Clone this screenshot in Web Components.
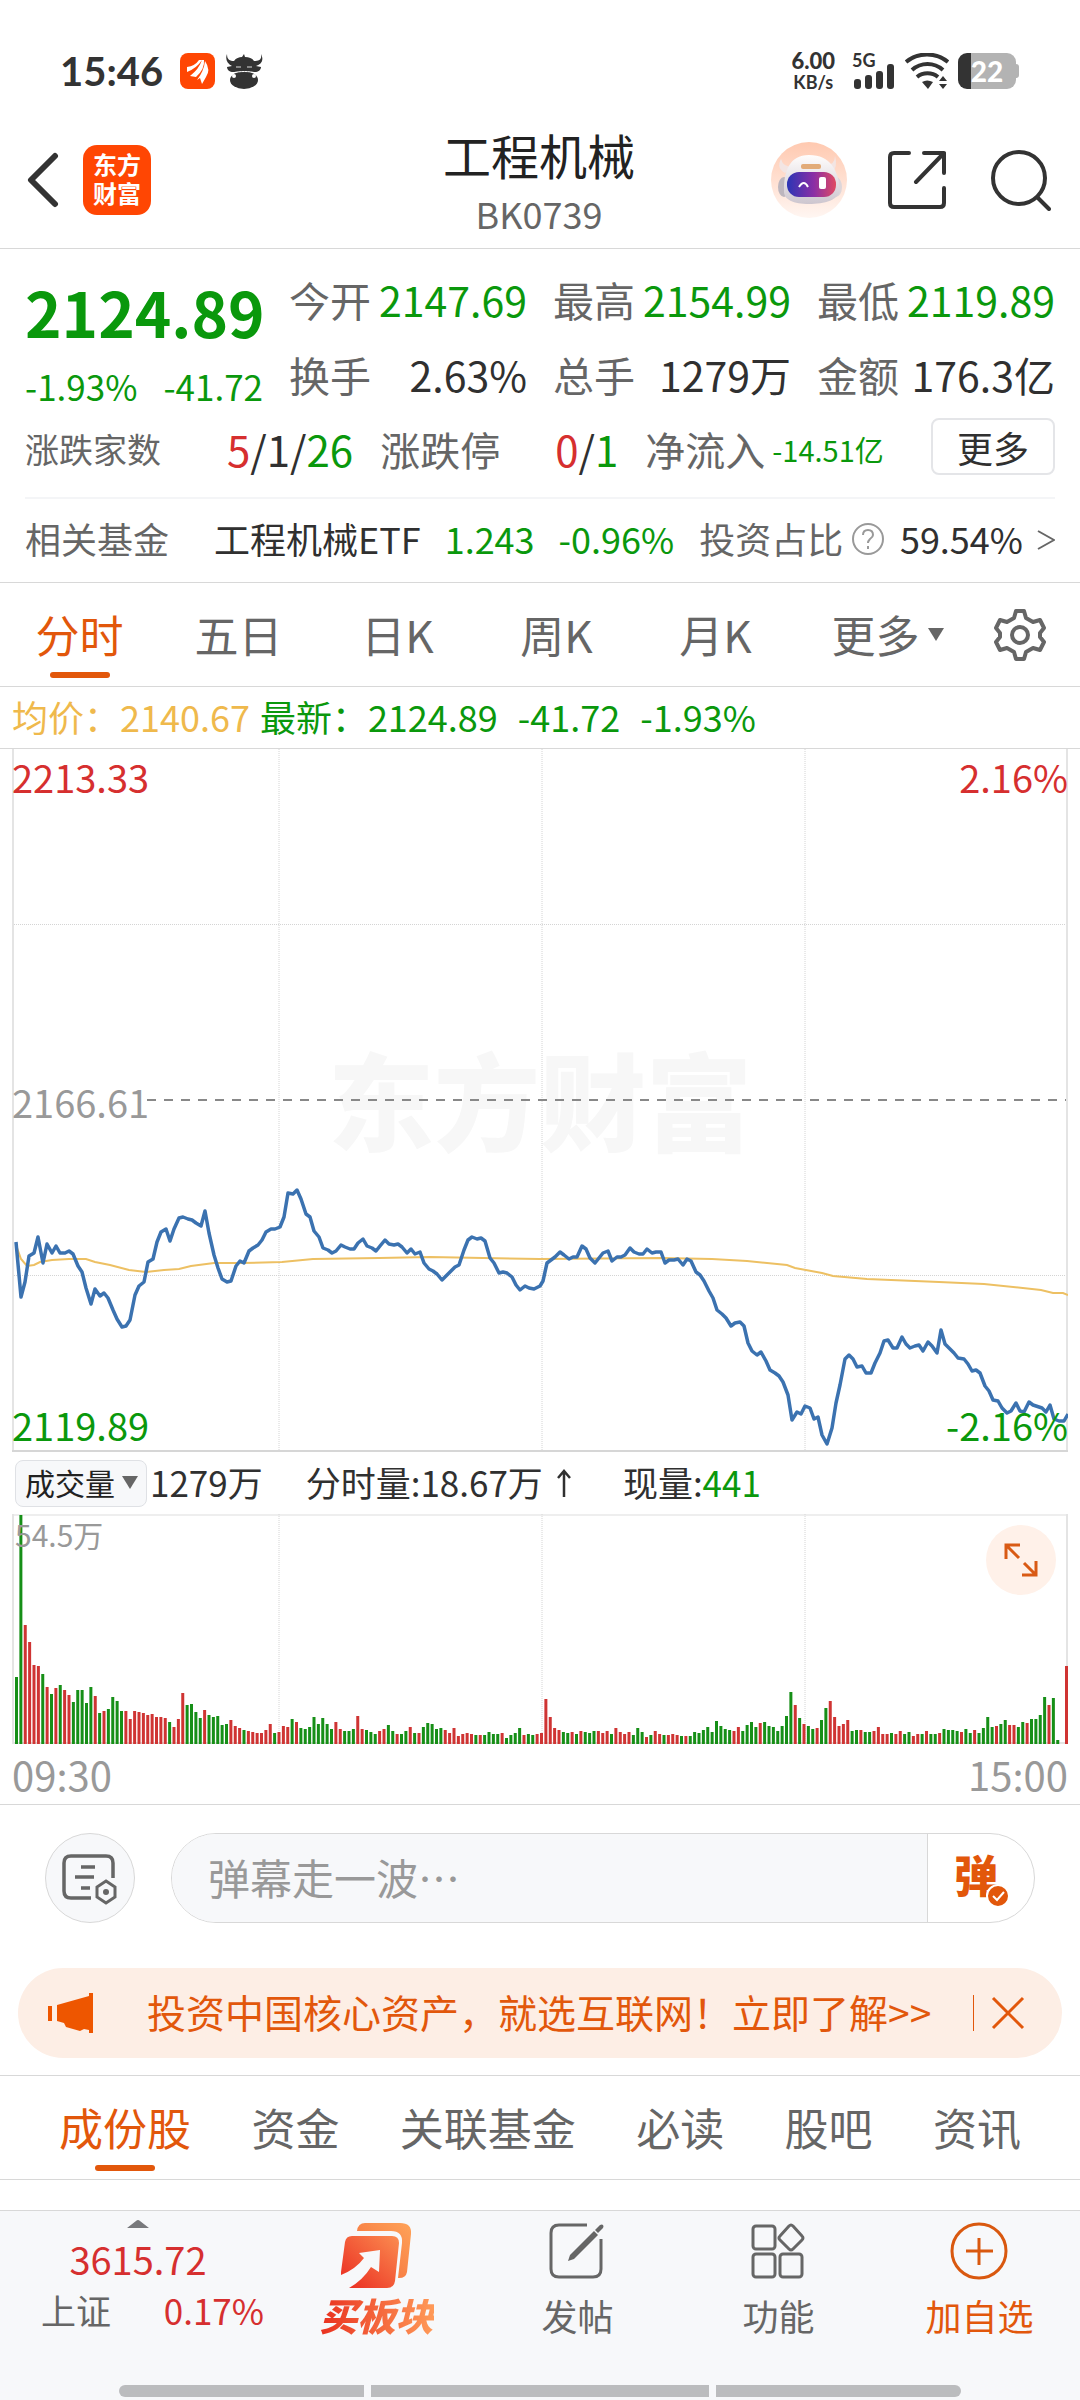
<!DOCTYPE html>
<html lang="zh-CN">
<head>
<meta charset="utf-8">
<meta name="viewport" content="width=device-width, initial-scale=1">
<title>工程机械 BK0739</title>
<style>
	:root {
		--up: #d62f2f;
		--down: #0a980c;
		--accent: #e2570b;
		--text: #303030;
		--muted: #666;
		--faint: #999;
		--line: #d8d8d8;
		--panel: #f7f8fa;
	}
	body {
		margin: 0;
		background: #fff;
		color: var(--text);
		font-family: "Noto Sans CJK SC", "Noto Sans", sans-serif;
	}
	stock-page {
		min-height: 100vh;
	}
</style>
</head>
<body>
<stock-page>
	<status-bar></status-bar>
	<page-header code="BK0739">工程机械</page-header>
	<quote-board></quote-board>
	<period-tabs></period-tabs>
	<trend-chart></trend-chart>
	<volume-chart></volume-chart>
	<comment-bar></comment-bar>
	<promo-banner>投资中国核心资产，就选互联网！立即了解&gt;&gt;</promo-banner>
	<section-tabs>
		<tab-item selected>成份股</tab-item>
		<tab-item>资金</tab-item>
		<tab-item>关联基金</tab-item>
		<tab-item>必读</tab-item>
		<tab-item>股吧</tab-item>
		<tab-item>资讯</tab-item>
	</section-tabs>
	<bottom-bar slot="footer"></bottom-bar>
</stock-page>

<script>
// registers an element whose shadow root is cloned from a template
function component(name, html, setup) {
	const template = document.createElement("template");
	template.innerHTML = html;
	customElements.define(name, class extends HTMLElement {
		constructor() {
			super();
			this.attachShadow({mode: "open"}).appendChild(template.content.cloneNode(true));
		}
		connectedCallback() {
			if(setup) setup(this, this.shadowRoot);
		}
	});
}

const controls = `
	button {
		font: inherit;
		color: inherit;
		background: none;
		border: 0;
		padding: 0;
		margin: 0;
		cursor: pointer;
	}
	svg { display: block; }
`;

component("stock-page",
`<style>
	:host {
		display: flex;
		flex-direction: column;
	}
	footer { margin-top: auto; }
</style>
<slot></slot>
<footer><slot name="footer"></slot></footer>`);

component("status-bar",
`<style>
	:host {
		display: flex;
		align-items: center;
		justify-content: space-between;
		height: 82px;
		padding: 30px 61px 0 60px;
		font-family: Lato, sans-serif;
		font-weight: 700;
		color: #333;
	}
	div { display: flex; align-items: center; }
	svg { display: block; }
	time { font-size: 40px; margin-right: 17px; }
	.rate {
		display: grid;
		justify-items: center;
		margin-right: 17px;
	}
	.rate b { font-size: 22px; line-height: 22px; }
	.rate small { font-size: 18px; line-height: 20px; }
	.signal { position: relative; margin-right: 10px; }
	.signal span {
		position: absolute;
		left: 0;
		top: -2px;
		font-size: 18px;
		line-height: 18px;
	}
	.battery {
		width: 58px;
		height: 36px;
		margin-left: 9px;
		border-radius: 9px;
		background: linear-gradient(90deg, #333 13px, #b3b3b3 13px);
		justify-content: center;
		color: #fff;
		font-weight: 900;
		font-size: 28px;
	}
	.tip {
		width: 3px;
		height: 14px;
		border-radius: 0 3px 3px 0;
		background: #b3b3b3;
	}
</style>
<div>
	<time>15:46</time>
	<svg width="35" height="36" viewBox="0 0 35 36">
		<rect width="35" height="36" rx="8" fill="#ff4603"/>
		<path fill="#fff" d="M7 14q8-1 12-7h3Q17 15 7 19zM10 23q9-7 12-16h2q1 9-8 17zM17 27q7-9 8-19 6 9 1 16l-4 7-2-6z"/>
	</svg>
	<svg width="37" height="36" viewBox="0 0 37 36" style="margin-left:11px">
		<path fill="#333" d="M1 1c0 6 3 7 7 7 2-3 5-4 8-4l2-3 1 3c4 0 7 1 9 4 5 0 8-1 7-7 3 6 1 10-5 12l5 1c0 3-3 5-6 5H7c-3 0-6-2-6-5l5-1C1 11-1 6 1 1z"/>
		<ellipse cx="18" cy="27" rx="14" ry="9" fill="#333"/>
		<path d="M6 20c8-2 17-2 24 0" fill="none" stroke="#fff" stroke-width="1"/>
		<path d="M10 14h5M21 14h5" stroke="#ddd" stroke-width="1"/>
		<circle cx="8" cy="23" r="2" fill="#fff"/><circle cx="28" cy="23" r="2" fill="#fff"/>
	</svg>
</div>
<div>
	<span class="rate"><b>6.00</b><small>KB/s</small></span>
	<div class="signal">
		<span>5G</span>
		<svg width="43" height="36" viewBox="0 0 43 36" fill="#333">
			<rect x="2" y="26" width="7" height="10" rx="3"/>
			<rect x="13" y="22" width="7" height="14" rx="3"/>
			<rect x="24" y="18" width="7" height="18" rx="3"/>
			<rect x="35" y="11" width="7" height="25" rx="3"/>
		</svg>
	</div>
	<svg width="44" height="36" viewBox="0 0 44 36" fill="none" stroke="#333" stroke-width="4">
		<path d="M1 9c12-10 30-10 42 0M7 17c9-8 22-8 31 0M12 24c6-5 15-5 21 0"/>
		<path d="M17 29q5-3 11 0l-5 7z" fill="#333" stroke="none"/>
		<path d="M34 28l4-5 4 5zM34 31h8l-4 5z" fill="#333" stroke="none"/>
	</svg>
	<div class="battery">22</div>
	<span class="tip"></span>
</div>`);

component("page-header",
`<style>${controls}
	:host {
		display: grid;
		grid-template-columns: 1fr auto 1fr;
		align-items: center;
		height: 136px;
		padding: 0 29px 0 27px;
		border-bottom: 1px solid var(--line);
	}
	.left, .right { display: flex; align-items: center; }
	.left { gap: 24px; }
	.right { justify-content: flex-end; }
	.logo {
		width: 68px;
		height: 70px;
		border-radius: 14px;
		background: #ff4603;
		color: #fff;
		font-weight: 700;
		font-size: 24px;
		line-height: 29px;
		padding: 4px 10px 8px;
		box-sizing: border-box;
	}
	.title { text-align: center; padding-top: 8px; }
	h1 { margin: 0; font-weight: 400; font-size: 48px; line-height: 58px; color: #222; }
	p { margin: 0; font-size: 36px; line-height: 60px; color: var(--muted); }
</style>
<div class="left">
	<button aria-label="返回">
		<svg width="32" height="56" viewBox="0 0 32 56" fill="none" stroke="#333" stroke-width="6" stroke-linecap="round" stroke-linejoin="round"><path d="M28 4L4 28l24 24"/></svg>
	</button>
	<div class="logo">东方财富</div>
</div>
<div class="title">
	<h1><slot></slot></h1>
	<p></p>
</div>
<div class="right">
	<button aria-label="助手">
		<svg width="76" height="76" viewBox="0 0 76 76">
			<defs>
				<linearGradient id="sky" x2="0" y2="1"><stop stop-color="#ffc9b0"/><stop offset="1" stop-color="#fff6f2"/></linearGradient>
				<linearGradient id="visor"><stop stop-color="#2b35b5"/><stop offset=".55" stop-color="#8b2fa5"/><stop offset="1" stop-color="#e04a62"/></linearGradient>
				<linearGradient id="head" x2="0" y2="1"><stop stop-color="#fffdfc"/><stop offset="1" stop-color="#cdc6cf"/></linearGradient>
			</defs>
			<circle cx="38" cy="38" r="38" fill="url(#sky)"/>
			<ellipse cx="13" cy="45" rx="6" ry="10" fill="#bdb6be"/>
			<ellipse cx="65" cy="45" rx="6" ry="10" fill="#ddd6da"/>
			<path d="M10 17q-5 9 4 14l8-6q-10 0-12-8zM64 14q3 10-3 18l-6-8q9-2 9-10z" fill="#f3e5e3"/>
			<path d="M38 13c22 0 29 16 31 34 0 11-16 15-31 15S12 58 13 48c0-18 5-35 25-35z" fill="url(#head)"/>
			<rect x="16" y="30" width="49" height="25" rx="12" fill="url(#visor)"/>
			<path d="M28 45q5-8 9 0" fill="none" stroke="#fff" stroke-width="2"/>
			<rect x="48" y="35" width="7" height="12" rx="2" fill="#fff"/>
			<rect x="30" y="22" width="20" height="5" rx="2" fill="#e2ab78"/>
		</svg>
	</button>
	<button aria-label="分享" style="margin-left:41px">
		<svg width="58" height="60" viewBox="0 0 58 60" fill="none" stroke="#333" stroke-width="4" stroke-linecap="round" stroke-linejoin="round"><path d="M21 3H6q-4 0-4 4v46q0 4 4 4h46q4 0 4-4V38M36 3h20v20M56 3L28 32"/></svg>
	</button>
	<button aria-label="搜索" style="margin-left:45px">
		<svg width="60" height="62" viewBox="0 0 60 62" fill="none" stroke="#333" stroke-width="4" stroke-linecap="round"><circle cx="28" cy="29" r="26"/><path d="M47 49l11 11"/></svg>
	</button>
</div>`,
(host, root) => {
	root.querySelector("p").textContent = host.getAttribute("code");
});

component("quote-item",
`<style>
	:host {
		display: flex;
		align-items: center;
		justify-content: space-between;
		font-size: 41px;
		white-space: nowrap;
	}
	span { color: var(--muted); }
</style>
<span></span><slot></slot>`,
(host, root) => {
	root.querySelector("span").textContent = host.getAttribute("label");
});

component("quote-board",
`<style>${controls}
	:host {
		display: block;
		padding: 12px 25px 0;
		border-bottom: 1px solid var(--line);
	}
	.top {
		display: grid;
		grid-template-columns: 238px 1fr 1fr 1fr;
		grid-template-rows: 75px 75px;
		column-gap: 26px;
	}
	.now { grid-row: span 2; padding-top: 4px; color: var(--down); }
	.price { font-weight: 700; font-size: 62px; line-height: 92px; }
	.change {
		display: flex;
		justify-content: space-between;
		font-size: 35px;
		line-height: 58px;
	}
	.row { display: flex; align-items: center; white-space: nowrap; }
	.breadth { height: 75px; font-size: 42px; }
	.breadth .label { font-size: 40px; }
	.funds { height: 77px; padding-bottom: 6px; font-size: 36px; }
	.rule { height: 2px; margin-top: 11px; background: #f4f5f7; }
	.label { color: var(--muted); }
	.up { color: var(--up); }
	.down { color: var(--down); }
	.more {
		width: 124px;
		height: 57px;
		margin-left: auto;
		margin-bottom: 4px;
		border: 2px solid #e4e5e8;
		border-radius: 8px;
		font-size: 36px;
		line-height: 48px;
	}
</style>
<div class="top">
	<div class="now">
		<div class="price">2124.89</div>
		<div class="change"><span>-1.93%</span><span>-41.72</span></div>
	</div>
	<quote-item label="今开"><span class="down">2147.69</span></quote-item>
	<quote-item label="最高"><span class="down">2154.99</span></quote-item>
	<quote-item label="最低"><span class="down">2119.89</span></quote-item>
	<quote-item label="换手">2.63%</quote-item>
	<quote-item label="总手">1279万</quote-item>
	<quote-item label="金额">176.3亿</quote-item>
</div>
<div class="row breadth">
	<span class="label" style="font-size:34px">涨跌家数</span>
	<span style="margin-left:66px"><span class="up">5</span>/1/<span class="down">26</span></span>
	<span class="label" style="margin-left:27px">涨跌停</span>
	<span style="margin-left:55px"><span class="up">0</span>/<span class="down">1</span></span>
	<span class="label" style="margin-left:27px">净流入</span>
	<span class="down" style="margin-left:7px;font-size:29px">-14.51亿</span>
	<button class="more">更多</button>
</div>
<div class="rule"></div>
<div class="row funds">
	<span class="label">相关基金</span>
	<span style="margin-left:45px">工程机械ETF</span>
	<span class="down" style="margin-left:24px">1.243</span>
	<span class="down" style="margin-left:24px">-0.96%</span>
	<span class="label" style="margin-left:25px">投资占比</span>
	<svg width="34" height="34" viewBox="0 0 34 34" fill="none" stroke="#999" stroke-width="2" style="margin-left:8px"><circle cx="17" cy="18" r="15"/><path d="M12 14q0-5 5-5t5 5q0 2-3 4-2 2-2 4M17 25v3"/></svg>
	<span style="margin-left:auto">59.54%</span>
	<svg width="18" height="26" viewBox="0 0 18 26" fill="none" stroke="#666" stroke-width="2" style="margin-left:14px"><path d="M1 6l16 9-16 9"/></svg>
</div>`);

component("tab-item",
`<style>${controls}
	:host {
		display: flex;
		justify-content: center;
		color: var(--muted);
		font-size: 44px;
	}
	button {
		position: relative;
		height: 103px;
		padding-bottom: 1px;
		white-space: nowrap;
	}
	:host([selected]) { color: var(--accent); }
	/* marker under the open tab */
	:host([selected]) button::after {
		content: "";
		position: absolute;
		left: calc(50% - 30px);
		bottom: 8px;
		width: 60px;
		height: 6px;
		border-radius: 3px;
		background: var(--accent);
	}
</style>
<button role="tab"><slot></slot></button>`);

component("period-tabs",
`<style>${controls}
	:host {
		display: grid;
		grid-template-columns: repeat(5, 159fr) 185fr 100fr;
		align-items: center;
		border-bottom: 1px solid var(--line);
	}
	i {
		display: inline-block;
		vertical-align: middle;
		margin: 0 0 14px 8px;
		border: solid transparent;
		border-width: 13px 8px 0;
		border-top-color: var(--muted);
	}
</style>
<tab-item selected>分时</tab-item>
<tab-item>五日</tab-item>
<tab-item>日K</tab-item>
<tab-item>周K</tab-item>
<tab-item>月K</tab-item>
<tab-item>更多<i></i></tab-item>
<button aria-label="设置">
	<svg width="78" height="52" viewBox="-14 0 78 52" fill="none" stroke="#666" stroke-width="4" stroke-linejoin="round"><path d="M22 2h8l2 7 7 4 7-2 4 8-4 5v4l4 5-4 8-7-2-7 4-2 7h-8l-2-7-7-4-7 2-4-8 4-5v-4l-4-5 4-8 7 2 7-4z"/><circle cx="26" cy="26" r="8"/></svg>
</button>`);

const priceLine = "4,493 9,548 13,533 17,507 22,504 26,488 31,514 35,495 40,504 44,497 48,504 53,504 57,502 61,505 66,517 70,523 74,539 79,555 83,540 88,547 92,544 96,549 101,561 105,570 110,578 114,577 118,571 123,546 127,537 132,533 136,513 141,510 145,493 149,483 154,480 158,492 162,480 167,469 171,468 176,470 180,471 184,474 189,477 193,462 197,484 202,506 206,519 210,530 215,533 219,532 224,517 228,512 232,514 237,502 241,499 246,496 250,491 254,483 259,480 263,480 268,478 272,468 276,444 281,445 285,441 289,450 294,465 298,468 302,482 307,488 311,499 316,501 320,504 324,502 329,496 333,498 338,500 342,500 346,494 351,490 355,497 360,499 364,502 368,497 373,491 377,495 382,496 386,495 390,498 395,504 399,500 403,505 408,503 412,514 417,520 421,522 425,525 430,531 434,527 439,522 443,518 447,516 452,501 456,491 460,488 465,490 469,489 473,492 478,509 482,514 487,524 491,523 495,524 500,528 504,536 508,541 513,537 517,539 522,540 526,538 528,537 531,532 535,514 539,511 543,508 548,503 552,506 557,510 561,508 565,508 570,497 574,500 578,509 583,514 587,509 591,504 596,502 600,512 605,508 609,508 613,506 618,499 622,503 627,505 631,505 635,500 640,504 644,503 649,503 653,514 657,511 662,511 666,510 671,516 675,510 679,512 684,523 688,526 692,532 697,542 701,549 705,561 710,565 714,569 719,577 723,574 728,573 732,577 736,594 740,602 745,606 749,603 754,612 758,621 763,624 767,627 771,633 776,646 780,671 785,663 789,665 793,657 798,659 802,670 806,668 810,686 815,695 820,679 824,654 828,636 833,610 837,606 841,610 845,618 850,617 854,624 859,624 863,614 868,604 872,592 876,591 881,599 885,599 890,588 894,595 898,599 903,597 907,596 911,602 916,593 920,597 925,604 929,581 933,595 938,600 942,604 946,609 952,610 956,615 960,622 964,621 968,624 973,637 977,642 981,651 986,652 990,659 995,664 999,662 1004,654 1008,662 1012,663 1017,653 1021,656 1030,659 1034,663 1038,656 1042,670 1047,672 1052,672 1056,665";
const averageLine = "4,496 9,510 15,517 22,516 28,513 40,511 57,510 74,510 83,513 98,516 117,521 134,523 152,521 167,520 179,517 202,514 229,514 270,513 301,510 367,509 418,508 528,510 649,509 700,510 735,512 775,516 783,519 810,524 821,527 855,530 927,533 972,535 1029,541 1041,544 1051,544 1056,546";

component("trend-chart",
`<style>
	:host { display: block; }
	.legend {
		display: flex;
		height: 61px;
		line-height: 59px;
		padding-left: 12px;
		font-size: 36px;
		color: var(--down);
		border-bottom: 1px solid var(--line);
		white-space: pre;
	}
	.legend span { margin-right: 20px; }
	.legend .avg { color: #efb94c; margin-right: 10px; }
	.plot { position: relative; margin: 0 12px; font-size: 38px; line-height: 44px; }
	svg { display: block; width: 100%; height: auto; }
	.plot span { position: absolute; }
	.tl { left: 0; top: 6px; color: var(--up); }
	.tr { right: 0; top: 6px; color: var(--up); }
	.ml { left: 0; top: calc(50% - 21px); color: var(--faint); }
	.bl { left: 0; bottom: 5px; color: var(--down); }
	.br { right: 0; bottom: 5px; color: var(--down); }
	.plot .mark {
		left: 0;
		right: 0;
		top: calc(50% - 56px);
		text-align: center;
		font-weight: 900;
		font-size: 106px;
		line-height: 104px;
		color: #f7f7f7;
		z-index: -1;
	}
</style>
<div class="legend"><span class="avg">均价：2140.67</span><span>最新：2124.89</span><span>-41.72</span><span>-1.93%</span></div>
<div class="plot">
	<span class="mark">东方财富</span>
	<svg viewBox="0 0 1056 703" fill="none">
		<path d="M0 175.5h1056M0 526.5h1056M267 0v702M530 0v702M793 0v702" stroke="#d4d4d4" stroke-dasharray="1 1"/>
		<path d="M135 351h921" stroke="#888" stroke-width="2" stroke-dasharray="9 8"/>
		<path d="M1 0v702M1055 0v702" stroke="#e4e4e4" stroke-width="2"/>
		<path d="M0 702h1056" stroke="#d6d6d6" stroke-width="2"/>
		<polyline points="${averageLine}" stroke="#edc063" stroke-width="2"/>
		<polyline points="${priceLine}" stroke="#3b72b0" stroke-width="3.5" stroke-linejoin="round"/>
	</svg>
	<span class="tl">2213.33</span>
	<span class="tr">2.16%</span>
	<span class="ml">2166.61</span>
	<span class="bl">2119.89</span>
	<span class="br">-2.16%</span>
</div>`);

// one entry a minute: bar height, then r(ise) or g(reen)
const volumes = "67g 229g 119r 102r 79r 78r 70g 57r 50g 56r 59g 54r 49r 42g 54g 54g 41g 57g 48r 31g 33r 35g 47g 43g 33g 33r 25r 33r 32r 31r 29r 30r 27r 27r 26r 22g 17r 25r 51r 39g 40g 32g 26g 34r 29g 27g 28g 19g 20g 24r 18r 16r 14g 13r 12r 11r 11r 14r 20r 11g 12r 18r 17r 25g 22r 16g 15g 17g 27g 20g 26g 20g 15g 22r 15r 13g 13g 15g 28r 15r 14g 12g 10g 13r 15r 19g 13g 10r 10g 13g 17r 11g 11r 17g 21g 20g 15g 16g 14r 11r 16r 8r 10r 11r 10r 9g 9r 9g 12g 10g 10g 11r 6g 9g 11g 16g 9r 10g 9g 10r 11r 45r 27r 16r 14r 12g 11g 12r 10g 13r 12g 11g 13g 13r 11r 13r 10g 16r 12r 10r 12r 9g 16g 12g 7r 9g 13r 10r 9g 9r 10r 9r 8g 8r 8g 12g 11g 14g 17g 12g 23g 18g 15g 14g 13r 17r 13g 19g 22g 17g 21r 22g 18g 17g 13g 18g 28g 52g 39r 26g 20r 18g 15g 16r 24g 36g 43r 27r 18r 20r 24r 13g 14g 14r 12g 12g 13r 17r 10r 10r 11g 10r 13r 10g 12g 8r 10r 10g 13r 10g 10g 11r 15g 14g 14g 13g 12r 15g 11g 14r 11g 16g 27g 17g 18r 20g 24g 19r 19r 17g 22g 21r 25g 25g 29g 47g 39r 46g 4g 0g 78r";

component("volume-chart",
`<style>${controls}
	:host { display: block; border-bottom: 1px solid var(--line); }
	.head {
		display: flex;
		align-items: center;
		height: 62px;
		padding-left: 15px;
		font-size: 35px;
		white-space: pre;
	}
	.pick { position: relative; display: flex; margin-right: 3px; }
	.pick::after {
		content: "";
		position: absolute;
		right: 9px;
		top: 16px;
		border: solid transparent;
		border-width: 13px 8px 0;
		border-top-color: var(--muted);
	}
	select {
		appearance: none;
		width: 132px;
		height: 47px;
		padding: 0 0 3px 9px;
		border: 1px solid #dfe1e5;
		border-radius: 8px;
		background: var(--panel);
		color: #222;
		font: inherit;
		font-size: 30px;
		line-height: 40px;
	}
	.head span { line-height: 58px; padding-bottom: 2px; }
	.down { color: var(--down); }
	.plot { position: relative; margin: 0 12px; }
	.plot svg { width: 100%; height: auto; }
	.peak {
		position: absolute;
		left: 3px;
		top: 0;
		font-size: 30px;
		line-height: 40px;
		color: var(--faint);
	}
	.expand {
		position: absolute;
		right: 12px;
		top: 11px;
		width: 70px;
		height: 70px;
		border-radius: 50%;
		background: #fff1e9;
	}
	.plot .expand svg { width: 34px; margin: auto; }
	.times {
		display: flex;
		justify-content: space-between;
		padding: 0 12px;
		font-size: 40px;
		line-height: 60px;
		color: var(--faint);
	}
</style>
<div class="head">
	<label class="pick"><select aria-label="指标"><option>成交量</option></select></label>
	<span>1279万</span>
	<span style="margin-left:43px">分时量:18.67万</span>
	<svg width="16" height="28" viewBox="0 0 16 28" fill="none" stroke="#303030" stroke-width="2.5" style="margin-left:13px"><path d="M8 28V2M2 9l6-7 6 7"/></svg>
	<span style="margin-left:51px">现量:</span><span class="down">441</span>
</div>
<div class="plot">
	<svg viewBox="0 0 1056 230" fill="none">
		<path d="M267 0v230M530 0v230M793 0v230" stroke="#d4d4d4" stroke-dasharray="1 1"/>
		<path d="M0 1h1056" stroke="#ddd"/>
		<path d="M1 0v230M1055 0v230M0 229h1056" stroke="#e4e4e4" stroke-width="2"/>
		<g id="bars"></g>
	</svg>
	<span class="peak">54.5万</span>
	<button class="expand" aria-label="全屏"><svg viewBox="0 0 34 34" fill="none" stroke="#d95a14" stroke-width="3"><path d="M2 16V2h14M2 2l13 13M32 18v14H18M32 32L20 20"/></svg></button>
</div>
<div class="times"><span>09:30</span><span>15:00</span></div>`,
(host, root) => {
	root.getElementById("bars").innerHTML = volumes.split(" ").map((v, i) => {
		const h = parseInt(v);
		const fill = v.endsWith("r") ? "#cf3433" : "#168f17";
		return `<rect x="${3 + i * 4.375}" y="${230 - h}" width="3" height="${h}" fill="${fill}"/>`;
	}).join("");
});

component("comment-bar",
`<style>${controls}
	:host {
		display: flex;
		gap: 36px;
		padding: 28px 45px 45px;
	}
	.set {
		width: 90px;
		height: 90px;
		box-sizing: border-box;
		border: 1px solid var(--line);
		border-radius: 50%;
		background: var(--panel);
	}
	.set svg { margin: 2px auto 0; }
	.field {
		flex: 1;
		display: flex;
		height: 90px;
		box-sizing: border-box;
		border: 1px solid var(--line);
		border-radius: 45px;
		overflow: hidden;
	}
	input {
		flex: 1;
		min-width: 0;
		border: 0;
		padding: 0 0 3px 36px;
		background: var(--panel);
		font: inherit;
		font-size: 42px;
		outline: 0;
	}
	input::placeholder { color: var(--faint); opacity: 1; }
	.send {
		position: relative;
		width: 107px;
		border-left: 1px solid var(--line);
		padding: 0 10px 8px 0;
		font-weight: 900;
		font-size: 44px;
		color: var(--accent);
	}
	.send svg { position: absolute; right: 24px; bottom: 14px; }
</style>
<button class="set" aria-label="弹幕设置">
	<svg width="56" height="54" viewBox="0 0 56 54" fill="none" stroke="#666" stroke-width="3.5"><path d="M29 46H9q-7 0-7-7V11q0-7 7-7h35q7 0 7 7v15"/><path d="M19 15h14M13 25h19M19 36h9"/><path d="M44 29l9 6v10l-9 6-9-6V35z" stroke-width="3"/><circle cx="44" cy="40" r="3" fill="#666" stroke="none"/></svg>
</button>
<div class="field">
	<input type="text" aria-label="弹幕" placeholder="弹幕走一波…">
	<button class="send">弹<svg width="24" height="24" viewBox="0 0 24 24"><circle cx="12" cy="12" r="11" fill="#e2570b" stroke="#fff" stroke-width="2"/><path d="M7 12l4 4 7-8" fill="none" stroke="#fff" stroke-width="2"/></svg></button>
</div>`);

component("promo-banner",
`<style>${controls}
	:host {
		display: flex;
		align-items: center;
		height: 90px;
		margin: 0 18px 17px;
		padding: 0 37px 0 30px;
		border-radius: 45px;
		background: #fdeee5;
		color: var(--accent);
		font-size: 39px;
	}
	a {
		flex: 1;
		margin-left: 53px;
		padding-bottom: 5px;
		color: inherit;
		text-decoration: none;
		white-space: nowrap;
	}
	i { width: 1px; height: 36px; margin-right: 17px; background: var(--accent); }
</style>
<svg width="46" height="40" viewBox="0 0 46 40" fill="#ee5600"><path d="M0 13h4v15H0zM9 12L41 3V0h4v40h-4v-3l-5-1-4 2-14-4-2-4-7-2z"/></svg>
<a href="#promo"><slot></slot></a>
<i></i>
<button aria-label="关闭"><svg width="34" height="34" viewBox="0 0 34 34" fill="none" stroke="#e2570b" stroke-width="3"><path d="M2 2l30 30M32 2L2 32"/></svg></button>`);

component("section-tabs",
`<style>
	:host {
		display: flex;
		justify-content: space-between;
		padding: 0 59px;
		border: solid var(--line);
		border-width: 1px 0;
	}
</style>
<slot></slot>`);

component("bottom-item",
`<style>${controls}
	:host { display: flex; justify-content: center; }
	button {
		display: flex;
		flex-direction: column;
		align-items: center;
		padding-top: 11px;
		color: var(--item-color, var(--muted));
		font-size: 36px;
		line-height: 52px;
	}
	.icon { display: flex; align-items: flex-start; height: 67px; }
	span { white-space: nowrap; }
</style>
<button><div class="icon"><slot name="icon"></slot></div><span><slot></slot></span></button>`);

component("bottom-bar",
`<style>${controls}
	:host {
		display: block;
		border-top: 1px solid var(--line);
		background: var(--panel);
	}
	.items {
		display: grid;
		grid-template-columns: 276fr repeat(4, 201fr);
		height: 174px;
	}
	.index {
		display: grid;
		grid-template-columns: auto auto;
		grid-template-rows: 17px 62px 40px;
		align-content: start;
		justify-content: space-between;
		line-height: 62px;
		padding: 0 12px;
		font-size: 35px;
		color: var(--up);
	}
	.index svg { grid-column: span 2; margin: 9px auto 0; }
	.index b { grid-column: span 2; font-weight: 400; font-size: 38px; text-align: center; }
	.index span { line-height: 40px; }
	.index .name { padding-left: 29px; color: var(--muted); }
	.buy {
		font-weight: 900;
		font-style: italic;
		font-size: 38px;
		line-height: 48px;
		background: linear-gradient(90deg, #e9301f, #ff9a58);
		-webkit-background-clip: text;
		color: transparent;
	}
	.home { display: flex; gap: 7px; padding: 0 119px 3px; }
	.home i { flex: 245; height: 12px; background: #bbbcbe; }
	.home i:nth-child(2) { flex: 338; }
	.home i:first-child { border-radius: 6px 0 0 6px; }
	.home i:last-child { border-radius: 0 6px 6px 0; }
</style>
<div class="items">
	<button class="index">
		<svg width="22" height="8" viewBox="0 0 22 8" fill="#78797c"><path d="M0 8l9-7q2-2 4 0l9 7z"/></svg>
		<b>3615.72</b>
		<span class="name">上证</span><span>0.17%</span>
	</button>
	<bottom-item>
		<svg slot="icon" width="72" height="66" viewBox="0 0 72 66">
			<defs>
				<linearGradient id="front" x1="0" y1="1" x2="1" y2="0"><stop stop-color="#ea2a20"/><stop offset="1" stop-color="#fb8c50"/></linearGradient>
				<linearGradient id="back" x1="0" y1="1" x2="1" y2="0"><stop stop-color="#f36a3a"/><stop offset="1" stop-color="#ffa358"/></linearGradient>
			</defs>
			<path fill="url(#back)" d="M17 9q1-8 8-8h35q12 0 11 11l-4 38q-1 6-8 6h-1l4-35q1-12-11-12z"/>
			<path fill="url(#front)" d="M1 50L5 20q1-6 7-6h40q7 0 7 7l-4 38q-1 7-8 7H9q14-8 22-21l8 5 1-22-21 3 5 5q-8 11-23 17z"/>
		</svg>
		<span class="buy">买板块</span>
	</bottom-item>
	<bottom-item>
		<svg slot="icon" width="56" height="58" viewBox="0 0 56 58" fill="none" stroke="#666" stroke-width="3"><path d="M38 3H10q-8 0-8 8v36q0 8 8 8h34q8 0 8-8V17"/><path d="M19 39l2-6 24-24 4 4-24 24z" fill="#666" stroke="none"/><path d="M46 8l5-5q2-1 3 0t0 3l-5 5z" fill="#666" stroke="none"/></svg>
		发帖
	</bottom-item>
	<bottom-item>
		<svg slot="icon" width="54" height="58" viewBox="0 0 54 58" fill="none" stroke="#666" stroke-width="3"><rect x="2" y="4" width="22" height="23" rx="3"/><rect x="2" y="32" width="22" height="23" rx="3"/><rect x="29" y="32" width="22" height="23" rx="3"/><path d="M38 4q2-2 4 0l9 10q2 2 0 4l-9 9q-2 2-4 0l-9-9q-2-2 0-4z"/></svg>
		功能
	</bottom-item>
	<bottom-item style="--item-color: var(--accent)">
		<svg slot="icon" width="58" height="58" viewBox="0 0 58 58" fill="none" stroke="#d9580f" stroke-width="3"><circle cx="29" cy="29" r="27"/><path d="M16 29h27M29 16v27"/></svg>
		加自选
	</bottom-item>
</div>
<div class="home"><i></i><i></i><i></i></div>`);
</script>
</body>
</html>
